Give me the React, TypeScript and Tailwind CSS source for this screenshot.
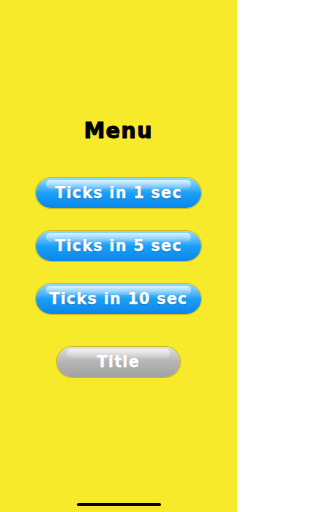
const font = { fontFamily: '"DejaVu Sans", "Liberation Sans", sans-serif' };

function BlueButton({ label }: { label: string }) {
  return (
    <button className="relative w-[165px] h-[30px] rounded-full bg-gradient-to-b from-[#8fdcff] via-[#1a9ff6] to-[#0b86ea] shadow-[0_0_0_1px_#d9b81e] overflow-hidden">
      <span className="absolute left-[10px] right-[10px] top-[2px] h-[9px] rounded-full bg-gradient-to-b from-white/70 to-white/10" />
      <span
        className="relative text-white text-[15px] font-bold tracking-[1px] [-webkit-text-stroke:0.25px_white] [text-shadow:0_1px_1px_rgba(0,60,140,0.5)]"
        style={font}
      >
        {label}
      </span>
    </button>
  );
}

export default function App() {
  return (
    <div className="w-[237px] h-[512px] bg-[#f7ea2b] flex flex-col items-center relative" style={font}>
      <h1 className="mt-[121px] text-[21px] font-bold text-black tracking-[1px] leading-none [-webkit-text-stroke:0.8px_black]">Menu</h1>

      <div className="mt-[36px] flex flex-col items-center gap-[23px]">
        <BlueButton label="Ticks in 1 sec" />
        <BlueButton label="Ticks in 5 sec" />
        <BlueButton label="Ticks in 10 sec" />
      </div>

      <button className="mt-[33px] relative w-[123px] h-[30px] rounded-full bg-gradient-to-b from-[#e2e2e2] via-[#b4b4b4] to-[#a2a2a2] shadow-[0_0_0_1px_#c9b92a] overflow-hidden">
        <span className="absolute left-[10px] right-[10px] top-[2px] h-[9px] rounded-full bg-gradient-to-b from-white/60 to-white/10" />
        <span className="relative text-white text-[15px] font-bold tracking-[1px] [-webkit-text-stroke:0.25px_white]" style={font}>
          Title
        </span>
      </button>

      {/* home indicator */}
      <div className="absolute bottom-[6px] w-[84px] h-[3px] rounded-full bg-black" />
    </div>
  );
}
